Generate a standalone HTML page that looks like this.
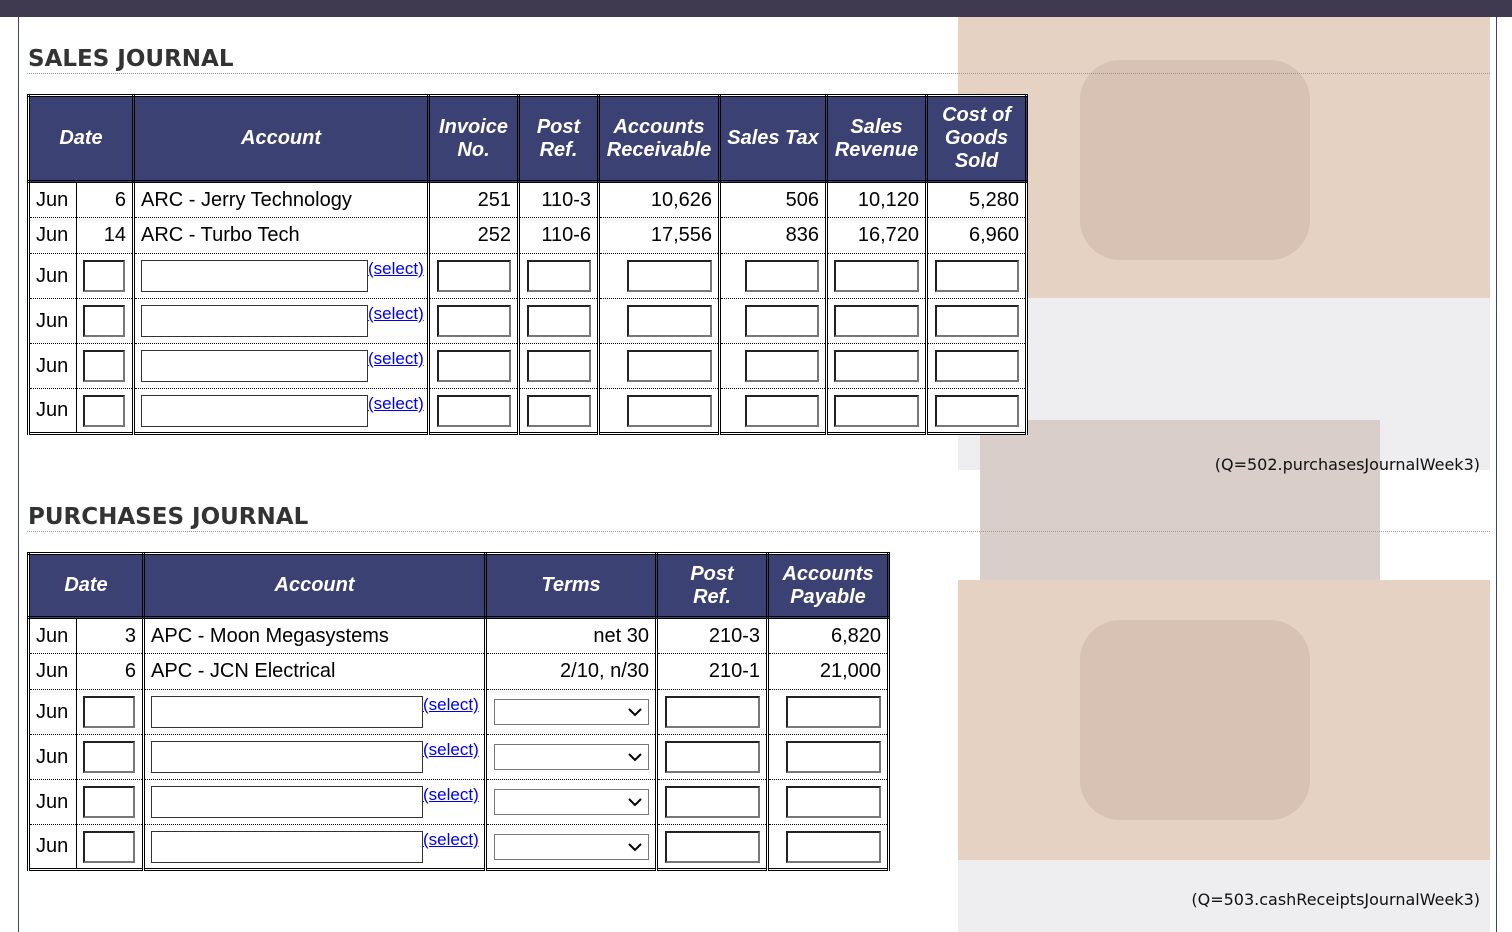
<!DOCTYPE html>
<html><head><meta charset="utf-8"><style>
body{margin:0;width:1512px;height:932px;overflow:hidden;background:#fff;font-family:"Liberation Sans",Arial,sans-serif;position:relative}
.top{position:absolute;left:0;top:0;width:1512px;height:17px;background:#3f3a50}
.lb{position:absolute;left:18px;top:17px;width:1px;height:915px;background:#3c4274}
.rb{position:absolute;left:1496px;top:17px;width:1px;height:915px;background:#3c4274}
.bg{position:absolute}
h2{position:absolute;left:28px;margin:0;font:bold 23px "DejaVu Sans",sans-serif;color:#333}
.dl{position:absolute;left:27px;width:1463px;border-top:1px dotted #999}
.q{position:absolute;right:32px;font:16px "DejaVu Sans",sans-serif;color:#111}
table{position:absolute;left:27px;border-collapse:collapse;table-layout:fixed;border:3px double #000;background:#fff}
th{background:#3c4173;color:#fff;font:italic bold 20px "Liberation Sans",Arial,sans-serif;line-height:23px;border:3px double #000;padding:0}
td{font-size:20px;border-left:3px double #000;border-right:3px double #000;border-bottom:1px dotted #000;padding:0 6px;white-space:nowrap;position:relative}
td.r{text-align:right}
td.m{border-right:1px solid #000}
td.d{border-left:1px solid #000}
.in{display:inline-block;box-sizing:border-box;border:2px solid #222;border-right-color:#777;border-bottom-color:#777;height:32px;vertical-align:middle;background:#fff}
.ia{display:inline-block;box-sizing:border-box;border:1px solid #333;height:32px;vertical-align:middle;background:#fff}
a{color:#00e;font-size:17px;position:absolute;top:5px;text-decoration:underline}
.sel{display:inline-block;box-sizing:border-box;border:1px solid #777;height:26px;width:155px;vertical-align:middle;position:relative;background:#fff}
.sel svg{position:absolute;right:6px;top:8px}
</style></head><body>
<div class="bg" style="left:958px;top:17px;width:532px;height:281px;background:#e6d2c3"></div>
<div class="bg" style="left:1080px;top:60px;width:230px;height:200px;background:#d8c2b4;border-radius:40px"></div>
<div class="bg" style="left:958px;top:298px;width:532px;height:172px;background:#eeeef0"></div>
<div class="bg" style="left:980px;top:420px;width:400px;height:160px;background:#d9cec9"></div>
<div class="bg" style="left:958px;top:580px;width:532px;height:280px;background:#e6d2c3"></div>
<div class="bg" style="left:1080px;top:620px;width:230px;height:200px;background:#d8c2b4;border-radius:40px"></div>
<div class="bg" style="left:958px;top:860px;width:532px;height:72px;background:#eeeef0"></div>
<div class="top"></div><div class="lb"></div><div class="rb"></div>
<h2 style="top:46px">SALES JOURNAL</h2>
<div class="dl" style="top:73px"></div>
<table style="top:94px;width:998px">
<colgroup><col style="width:48px"><col style="width:57px"><col style="width:295px"><col style="width:90px"><col style="width:80px"><col style="width:121px"><col style="width:107px"><col style="width:100px"><col style="width:100px"></colgroup>
<tr style="height:86px"><th colspan="2">Date</th><th>Account</th><th>Invoice<br>No.</th><th>Post<br>Ref.</th><th>Accounts<br>Receivable</th><th>Sales Tax</th><th>Sales<br>Revenue</th><th>Cost of<br>Goods<br>Sold</th></tr>
<tr style="height:36px"><td class="m">Jun</td><td class="r d">6</td><td>ARC - Jerry Technology</td><td class="r">251</td><td class="r">110-3</td><td class="r">10,626</td><td class="r">506</td><td class="r">10,120</td><td class="r">5,280</td></tr>
<tr style="height:36px"><td class="m">Jun</td><td class="r d">14</td><td>ARC - Turbo Tech</td><td class="r">252</td><td class="r">110-6</td><td class="r">17,556</td><td class="r">836</td><td class="r">16,720</td><td class="r">6,960</td></tr>
<tr style="height:45px"><td class="m">Jun</td><td class="d"><span class="in" style="width:42px"></span></td><td><span class="ia" style="width:227px"></span><a>(select)</a></td><td class="r"><span class="in" style="width:74px"></span></td><td class="r"><span class="in" style="width:64px"></span></td><td class="r"><span class="in" style="width:85px"></span></td><td class="r"><span class="in" style="width:74px"></span></td><td class="r"><span class="in" style="width:85px"></span></td><td class="r"><span class="in" style="width:84px"></span></td></tr>
<tr style="height:45px"><td class="m">Jun</td><td class="d"><span class="in" style="width:42px"></span></td><td><span class="ia" style="width:227px"></span><a>(select)</a></td><td class="r"><span class="in" style="width:74px"></span></td><td class="r"><span class="in" style="width:64px"></span></td><td class="r"><span class="in" style="width:85px"></span></td><td class="r"><span class="in" style="width:74px"></span></td><td class="r"><span class="in" style="width:85px"></span></td><td class="r"><span class="in" style="width:84px"></span></td></tr>
<tr style="height:45px"><td class="m">Jun</td><td class="d"><span class="in" style="width:42px"></span></td><td><span class="ia" style="width:227px"></span><a>(select)</a></td><td class="r"><span class="in" style="width:74px"></span></td><td class="r"><span class="in" style="width:64px"></span></td><td class="r"><span class="in" style="width:85px"></span></td><td class="r"><span class="in" style="width:74px"></span></td><td class="r"><span class="in" style="width:85px"></span></td><td class="r"><span class="in" style="width:84px"></span></td></tr>
<tr style="height:45px"><td class="m">Jun</td><td class="d"><span class="in" style="width:42px"></span></td><td><span class="ia" style="width:227px"></span><a>(select)</a></td><td class="r"><span class="in" style="width:74px"></span></td><td class="r"><span class="in" style="width:64px"></span></td><td class="r"><span class="in" style="width:85px"></span></td><td class="r"><span class="in" style="width:74px"></span></td><td class="r"><span class="in" style="width:85px"></span></td><td class="r"><span class="in" style="width:84px"></span></td></tr>
</table>
<div class="q" style="top:455px">(Q=502.purchasesJournalWeek3)</div>
<h2 style="top:504px">PURCHASES JOURNAL</h2>
<div class="dl" style="top:531px"></div>
<table style="top:552px;width:860px">
<colgroup><col style="width:48px"><col style="width:67px"><col style="width:342px"><col style="width:171px"><col style="width:111px"><col style="width:121px"></colgroup>
<tr style="height:64px"><th colspan="2">Date</th><th>Account</th><th>Terms</th><th>Post<br>Ref.</th><th>Accounts<br>Payable</th></tr>
<tr style="height:36px"><td class="m">Jun</td><td class="r d">3</td><td>APC - Moon Megasystems</td><td class="r">net 30</td><td class="r">210-3</td><td class="r">6,820</td></tr>
<tr style="height:36px"><td class="m">Jun</td><td class="r d">6</td><td>APC - JCN Electrical</td><td class="r">2/10, n/30</td><td class="r">210-1</td><td class="r">21,000</td></tr>
<tr style="height:45px"><td class="m">Jun</td><td class="d"><span class="in" style="width:52px"></span></td><td><span class="ia" style="width:272px"></span><a>(select)</a></td><td class="r"><span class="sel"><svg width="14" height="9"><path d="M1 1l6 6 6-6" stroke="#000" stroke-width="2" fill="none"/></svg></span></td><td class="r"><span class="in" style="width:95px"></span></td><td class="r"><span class="in" style="width:95px"></span></td></tr>
<tr style="height:45px"><td class="m">Jun</td><td class="d"><span class="in" style="width:52px"></span></td><td><span class="ia" style="width:272px"></span><a>(select)</a></td><td class="r"><span class="sel"><svg width="14" height="9"><path d="M1 1l6 6 6-6" stroke="#000" stroke-width="2" fill="none"/></svg></span></td><td class="r"><span class="in" style="width:95px"></span></td><td class="r"><span class="in" style="width:95px"></span></td></tr>
<tr style="height:45px"><td class="m">Jun</td><td class="d"><span class="in" style="width:52px"></span></td><td><span class="ia" style="width:272px"></span><a>(select)</a></td><td class="r"><span class="sel"><svg width="14" height="9"><path d="M1 1l6 6 6-6" stroke="#000" stroke-width="2" fill="none"/></svg></span></td><td class="r"><span class="in" style="width:95px"></span></td><td class="r"><span class="in" style="width:95px"></span></td></tr>
<tr style="height:45px"><td class="m">Jun</td><td class="d"><span class="in" style="width:52px"></span></td><td><span class="ia" style="width:272px"></span><a>(select)</a></td><td class="r"><span class="sel"><svg width="14" height="9"><path d="M1 1l6 6 6-6" stroke="#000" stroke-width="2" fill="none"/></svg></span></td><td class="r"><span class="in" style="width:95px"></span></td><td class="r"><span class="in" style="width:95px"></span></td></tr>
</table>
<div class="q" style="top:890px">(Q=503.cashReceiptsJournalWeek3)</div>
</body></html>
